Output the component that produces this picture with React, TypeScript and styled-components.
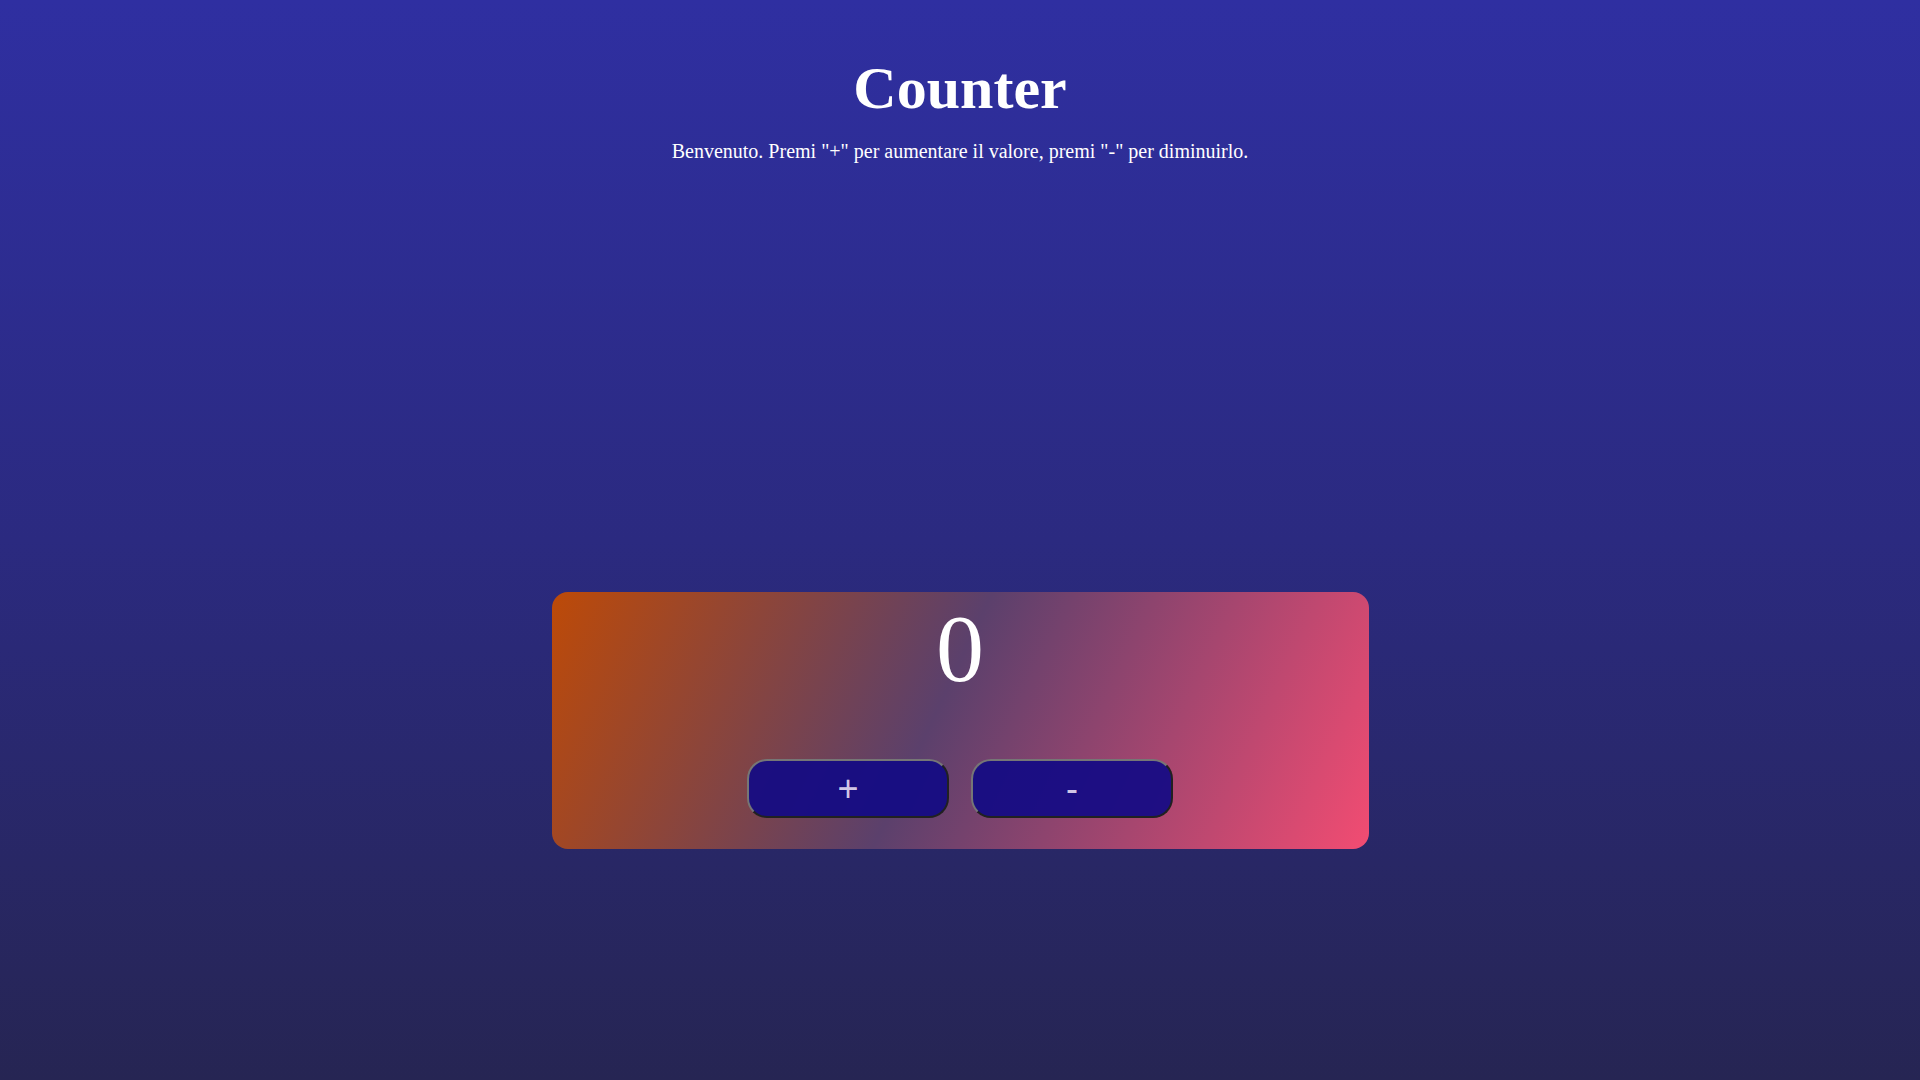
import { useState } from "react";
import styled, { createGlobalStyle } from "styled-components";

const GlobalStyle = createGlobalStyle`
  html, body {
    margin: 0;
    padding: 0;
  }
  body {
    font-family: "Liberation Serif", "Times New Roman", serif;
    color: #ffffff;
  }
`;

const Page = styled.div`
  min-height: 100vh;
  box-sizing: border-box;
  background: linear-gradient(180deg, #2f2fa1 0%, #2b2a80 50%, #262553 100%);
  display: flex;
  flex-direction: column;
  align-items: center;
  padding-top: 54px;
  text-align: center;
`;

const Title = styled.h1`
  margin: 0;
  font-size: 60px;
  font-weight: 700;
  line-height: normal;
`;

const Subtitle = styled.p`
  margin: 17px 0 0;
  font-size: 20px;
  line-height: normal;
`;

const Card = styled.div`
  margin-top: 429px;
  width: 817px;
  height: 257px;
  box-sizing: border-box;
  padding-top: 1px;
  border-radius: 16px;
  background: linear-gradient(115deg, #bd4a08 0%, #5b406c 47%, #f24c72 100%);
  display: flex;
  flex-direction: column;
  align-items: center;
`;

const Count = styled.div`
  font-size: 96px;
  line-height: normal;
`;

const Buttons = styled.div`
  margin-top: 55px;
  display: flex;
  gap: 22px;
`;

const CounterBtn = styled.button`
  width: 202px;
  height: 59px;
  box-sizing: border-box;
  border: 2px outset rgb(118, 118, 118);
  border-radius: 20px;
  background-color: rgba(18, 10, 132, 0.92);
  color: rgba(235, 225, 245, 0.9);
  font-family: "Liberation Sans", Arial, sans-serif;
  font-size: 36px;
  line-height: 1;
  cursor: pointer;
  padding: 0;
`;

function App() {
  const [count, setCount] = useState(0);

  return (
    <Page>
      <GlobalStyle />
      <Title>Counter</Title>
      <Subtitle>
        Benvenuto. Premi "+" per aumentare il valore, premi "-" per diminuirlo.
      </Subtitle>
      <Card>
        <Count>{count}</Count>
        <Buttons>
          <CounterBtn onClick={() => setCount(count + 1)}>+</CounterBtn>
          <CounterBtn onClick={() => setCount(count - 1)}>-</CounterBtn>
        </Buttons>
      </Card>
    </Page>
  );
}

export default App;
